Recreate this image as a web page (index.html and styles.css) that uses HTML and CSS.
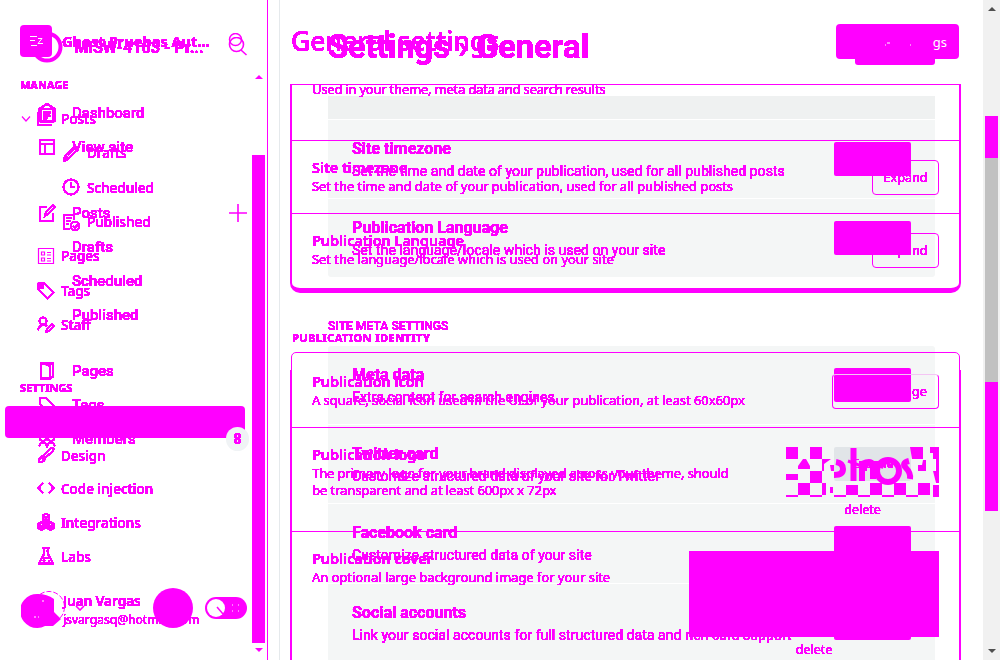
FILE: index.html
```html
<!DOCTYPE html>
<html lang="en">
<head>
<meta charset="utf-8">
<title>General settings</title>
<link rel="stylesheet" href="styles.css">
</head>
<body>
<svg class="defs" width="0" height="0"><filter id="crisp" x="-5%" y="-20%" width="110%" height="140%" color-interpolation-filters="sRGB"><feComponentTransfer><feFuncA type="linear" slope="30" intercept="-2"/></feComponentTransfer></filter></svg>
<div class="stage">
  <div class="layer roboto">
    <aside class="side">
      <header class="b-brand"><svg width="32" height="32"><circle cx="15" cy="16" r="13.5" fill="none" stroke="#f0f" stroke-width="4"/></svg><span class="t b-name">MISW-4103 - Pr...</span><svg class="b-search" width="20" height="20" fill="none" stroke="#f0f" stroke-width="1.6"><circle cx="8.5" cy="7.5" r="7"/><path d="M13 13l5.5 5"/></svg></header>
      <nav class="b-nav">
        <a><svg class="ic" viewBox="0 0 18 20"><path d="M1 6l8-5 8 5v12H1zM5 9h8M5 12h7M5 15h5"/></svg><span class="t">Dashboard</span></a>
        <a><svg class="ic" viewBox="0 0 18 20"><path d="M2 3h14v14H2zM2 7h14M7 7v10"/></svg><span class="t">View site</span></a>
        <a class="gap-lg"><svg class="ic" viewBox="0 0 18 20"><path d="M9 4H2v14h13v-8M7 13l1-4 7-7 2 2-7 7z"/></svg><span class="t">Posts</span><svg class="plus" width="18" height="18" stroke="#f0f" stroke-width="1.6"><path d="M0 9h18M9 0v18"/></svg></a>
        <a><i class="ic"></i><span class="t">Drafts</span></a>
        <a><i class="ic"></i><span class="t">Scheduled</span></a>
        <a><i class="ic"></i><span class="t">Published</span></a>
        <a class="gap-md"><svg class="ic" viewBox="0 0 18 20"><path d="M3 2.500h12v13l-3 2H3zM7 3l5 2v12"/></svg><span class="t">Pages</span></a>
        <a><svg class="ic" viewBox="0 0 18 20"><path d="M2 3h6l9 9-6 6-9-9z"/></svg><span class="t">Tags</span></a>
        <a><svg class="ic" viewBox="0 0 18 20"><circle cx="5" cy="9" r="3"/><circle cx="13" cy="9" r="3"/><path d="M1 17q4-8 8 0q4-8 8 0"/></svg><span class="t">Members</span></a>
      </nav>
      <footer class="b-foot"><svg class="ring" width="34" height="34"><circle cx="17" cy="17" r="15.500" fill="none" stroke="#f0f" stroke-dasharray="5 2"/></svg><svg class="chev" width="10" height="6" fill="none" stroke="#f0f" stroke-width="1.600"><path d="M1 1l4 4 4-4"/></svg><i class="dot"></i><svg class="toggle" width="42" height="22"><rect width="42" height="22" rx="11" fill="#f0f"/><circle cx="11" cy="11" r="9" fill="#fff"/><path d="M12 10l6 7" stroke="#f0f" stroke-width="1.500"/><path d="M27 8h1M33 8h1M27 14h1M33 14h1" stroke="#fff"/></svg></footer>
    </aside>
    <main class="b-main">
      <header class="b-head"><h1 class="t">Settings › General</h1><i class="b-save"></i></header>
      <section class="b-card first">
        <div class="b-row dim"></div>
        <div class="b-row"><div><h3 class="t">Site timezone</h3><p class="t">Set the time and date of your publication, used for all published posts</p></div><i class="b-btn"></i></div>
        <div class="b-row"><div><h3 class="t">Publication Language</h3><p class="t">Set the language/locale which is used on your site</p></div><i class="b-btn"></i></div>
      </section>
      <h2 class="t b-label">SITE META SETTINGS</h2>
      <section class="b-card second">
        <div class="b-row"><div><h3 class="t">Meta data</h3><p class="t">Extra content for search engines</p></div><i class="b-btn"></i></div>
        <div class="b-row"><div><h3 class="t">Twitter card</h3><p class="t">Customize structured data of your site for Twitter</p></div><span class="b-btn grey"><span class="t">Expand</span></span></div>
        <div class="b-row tall"><div><h3 class="t">Facebook card</h3><p class="t">Customize structured data of your site</p></div><i class="b-btn"></i></div>
        <div class="b-row"><div><h3 class="t">Social accounts</h3><p class="t">Link your social accounts for full structured data and rich card support</p></div><i class="b-btn"></i></div>
      </section>
    </main>
  </div>

  <div class="layer noto">
    <aside class="side a-side">
      <header class="a-brand"><svg width="32" height="32"><rect width="32" height="32" rx="4" fill="#f0f"/><path d="M10 11.500h7M10 15.500h5M18 13.500h4l-4 5h5M11 20.500h6" fill="none" stroke="#fff"/></svg><span class="t a-name">Ghost Pruebas Aut...</span><svg class="a-search" width="16" height="18" fill="none" stroke="#f0f" stroke-width="1.500"><circle cx="7.500" cy="6.500" r="6"/></svg></header>
      <h2 class="t a-label manage">MANAGE</h2>
      <nav class="a-nav">
        <a><svg class="caret" width="10" height="6" fill="none" stroke="#f0f" stroke-width="1.200"><path d="M1 .5l4 4.500 4-4.500"/></svg><svg class="ic" viewBox="0 0 18 18"><path d="M3.500 1h13v12.500h-13zM.5 4v13.500h14M6 5h8M6 8h8M6 11h4"/></svg><span class="t">Posts</span></a>
        <a class="sub"><svg class="ic" viewBox="0 0 18 18"><path d="M2 17l1-5L13 2l3 3L6 15zM4 12l3 3M6 11l7-7"/></svg><span class="t">Drafts</span></a>
        <a class="sub"><svg class="ic" viewBox="0 0 18 18"><circle cx="9" cy="9" r="7.500"/><path d="M9 4v5h4"/></svg><span class="t">Scheduled</span></a>
        <a class="sub"><svg class="ic" viewBox="0 0 18 18"><path d="M8 16H2V2h10v5M4 5h6M4 8h5M4 11h3"/><circle cx="13" cy="13" r="4.300"/><path d="M11 13l2 2 3-4"/></svg><span class="t">Published</span></a>
        <a class="low"><svg class="ic thin" viewBox="0 0 18 18"><path d="M1.500 1.500h15v15h-15zM4.500 5h3v3h-3zM4.500 11h3v3h-3zM10 5.500h4M10 8h4M10 11.500h4M10 14h4"/></svg><span class="t">Pages</span></a>
        <a class="low"><svg class="ic" viewBox="0 0 18 18"><path d="M1.500 1.500h6l9 9-6 6-9-9z"/><circle cx="5" cy="5" r="1"/></svg><span class="t">Tags</span></a>
        <a class="low"><svg class="ic" viewBox="0 0 18 18"><circle cx="6" cy="5" r="3.500"/><path d="M1 14q1-5 7-5l2 1M9 16l1-3 5-5 2 2-5 5z"/></svg><span class="t">Staff</span></a>
      </nav>
      <h2 class="t a-label settings">SETTINGS</h2>
      <nav class="a-nav lower">
        <a class="current"><b class="count"><span class="t">8</span></b></a>
        <a><svg class="ic" viewBox="0 0 18 18"><path d="M6 10L14 2q4-1 2 3l-8 7zM6 10q-4 1-4 6 6 0 6-4zM5 12l2 2"/></svg><span class="t">Design</span></a>
        <a><svg class="ic" viewBox="0 0 18 18"><path d="M6 4L1.500 9 6 14M12 4l4.500 5L12 14"/></svg><span class="t">Code injection</span></a>
        <a><svg class="ic" viewBox="0 0 18 18"><path d="M6 2l3-1 3 1v5l-3 2-3-2zM1.500 11l3-2 3 2v4l-3 2-3-2zM10.500 11l3-2 3 2v4l-3 2-3-2zM6 3l3 2 3-2M2 12l3 1 2-1M11 12l3 1 2-1M9 5v4M4.500 13v3M13.500 13v3"/></svg><span class="t">Integrations</span></a>
        <a><svg class="ic" viewBox="0 0 18 18"><path d="M5 1h8M7 1v6l-5 9.500h14L11 7V1M9 4h2M5 11h8M6 14l2-1M11 14h2"/></svg><span class="t">Labs</span></a>
      </nav>
      <footer class="a-user"><svg width="40" height="36"><path d="M17 2a17 17 0 1 0 7 32h8l8-7-7-7V7q-7-5-16-5z" fill="#f0f"/><path d="M13 25h2M17 25h1M22 8v2" stroke="#fff"/></svg><div><p class="t user-name">Juan Vargas</p><p class="t user-mail">jsvargasq@hotmail.com</p></div></footer>
      <div class="side-scroll"><svg width="8" height="5"><path d="M0 5l4-4 4 4z" fill="#f0f"/></svg><i></i><svg width="8" height="5"><path d="M0 0h8L4 4z" fill="#f0f"/></svg></div>
    </aside>
    <main class="a-main">
      <header class="a-head"><h1 class="t">General settings</h1><span class="a-save"><svg width="48" height="20"><path d="M0 13h1M2 11h3M25 13h1" fill="none" stroke="#fff"/></svg><span class="gs">gs</span></span></header>
      <section class="a-card top">
        <div class="a-row r1"><p class="t">Used in your theme, meta data and search results</p></div>
        <div class="a-row r2"><div><h3 class="t">Site timezone</h3><p class="t">Set the time and date of your publication, used for all published posts</p></div><span class="a-btn"><span class="t">Expand</span></span></div>
        <div class="a-row r3"><div><h3 class="t">Publication Language</h3><p class="t">Set the language/locale which is used on your site</p></div><span class="a-btn"><span class="t">Expand</span></span></div>
      </section>
      <h2 class="t a-label identity">PUBLICATION IDENTITY</h2>
      <section class="a-card bottom">
        <div class="a-row r4"><div><h3 class="t">Publication icon</h3><p class="t">A square, social icon used in the UI of your publication, at least 60x60px</p></div><span class="a-btn wide"><span class="t">Upload image</span></span></div>
        <div class="a-row r5"><div><h3 class="t">Publication logo</h3><p class="t two">The primary logo for your brand displayed across your theme, should<br>be transparent and at least 600px x 72px</p></div>
          <div class="logo"><svg width="153" height="50"><g fill="#f0f"><path d="M0 0h12v12H0zM24 0h12v12H24zM124 0h13v12h-11zM144 0h9v12h-6v-6h-3zM12 19l5-7h3l4 7v3H12zM0 27h12v6H0zM24 24h12v12H24zM36 12h9l-7 5v7h-2zM12 36h12v12H12zM132 18h4l1-5h3v11h-8zM147 24h6v12h-3zM150 12h3v12h-3zM0 48h12v2H0zM24 48h12v2H24zM36 36h4v12h-4zM60 38h12v10H60zM84 36h12v12H84zM108 36h12v12h-12zM132 36h12v12h-12zM147 38h6v12h-6zM48 48h12v2H48zM72 48h12v2H72zM96 48h12v2H96zM120 48h12v2h-12zM44 18h4v6h-3zM44 40h3v6h-3z"/></g><g fill="none" stroke="#f0f" stroke-width="6"><path d="M50 15q7 1 7 7t-9 6M67.500 1v33M76 34V16M76 17q11-5 11 3v12"/><ellipse cx="102" cy="24" rx="11" ry="11"/><path d="M123 14q-8 2-3 7t4 11"/></g><path d="M62 14l11 4 4 3 4-4 5 3 5-4 5 4 4-5 6 5" fill="none" stroke="#f0f" stroke-width="3"/></svg><span class="t">delete</span></div></div>
        <div class="a-row r6"><div><h3 class="t">Publication cover</h3><p class="t">An optional large background image for your site</p></div><div class="cover"><i></i><span class="t">delete</span></div></div>
      </section>
    </main>
    <div class="page-scroll"><svg width="8" height="5"><path d="M0 5l4-4 4 4z" fill="#505050"/></svg><i class="thumb"></i><svg width="8" height="5"><path d="M0 0h8L4 4z" fill="#505050"/></svg></div>
  </div>
</div>
</body>
</html>
```
FILE: styles.css
```css
* { box-sizing: border-box; }
body, h1, h2, h3, p { margin: 0; }
body { background: #fff; color: #f0f; overflow: hidden; }
.defs { position: absolute; }
.stage { position: relative; width: 1000px; height: 660px; overflow: hidden; }
.layer { position: absolute; inset: 0; display: flex; }
.roboto { font-family: Roboto, sans-serif; }
.noto { font-family: "Noto Sans", sans-serif; }
.t { filter: url(#crisp); white-space: nowrap; display: block; }
svg { display: block; flex: none; }
.ic { width: 18px; height: 20px; fill: none; stroke: #f0f; stroke-width: 1.6; flex: none; filter: url(#crisp); }
.ic.thin { stroke-width: 1.2; filter: none; }
.side { width: 280px; height: 660px; flex: none; border-right: 1px solid #e5e9ec; }

/* base sidebar */
.b-brand { height: 96px; padding: 31px 0 0 32px; display: flex; align-items: flex-start; }
.b-name { font-size: 16.200px; line-height: 34px; margin-left: 10px; width: 154px; font-weight: 700; }
.b-search { margin-top: 6px; }
.b-nav a { display: flex; align-items: center; height: 34px; padding-left: 38px; font-size: 15px; font-weight: 500; }
.b-nav .ic { margin-right: 16px; }
.b-nav .gap-lg { margin-top: 32px; }
.b-nav .gap-md { margin-top: 22px; }
.plus { margin-left: auto; margin-right: 32px; }
.b-foot { display: flex; align-items: center; padding-left: 32px; margin-top: 132px; height: 40px; }
.ring { margin-top: -2px; }
.chev { margin-left: 9px; margin-right: 68px; }
.dot { width: 40px; height: 40px; border-radius: 50%; background: #f0f; }
.toggle { margin-left: 12px; }

/* base content */
.b-main { padding-left: 48px; width: 655px; }
.b-head { height: 96px; display: flex; justify-content: space-between; }
.b-head h1 { font-size: 32.600px; line-height: 40px; margin-top: 27px; font-weight: 700; }
.b-save { width: 80px; height: 39px; margin-top: 26px; background: #f0f; border-radius: 3px; }
.b-card { background: #f4f6f6; border-radius: 3px; }
.b-row { height: 79px; padding: 18px 24px 0; display: flex; justify-content: space-between; border-bottom: 1px solid #fff; }
.b-row.tall { height: 80px; }
.b-row:last-child { border-bottom: 0; }
.b-row.dim { height: 24px; background: #eff1f1; }
.b-row h3 { font-size: 16px; line-height: 21px; font-weight: 700; }
.b-row p { font-size: 14px; line-height: 20px; margin-top: 2px; letter-spacing: .05px; }
.b-btn { width: 77px; height: 34px; margin-top: 4px; border-radius: 2px; background: #f0f; flex: none; }
.b-btn.grey { background: #e1e5e8; font-size: 13px; text-align: center; line-height: 34px; }
.b-card.first { height: 181px; }
.b-label { font-size: 12px; line-height: 17px; margin: 41px 0 11px; font-weight: 500; letter-spacing: .08px; }

/* upper sidebar */
.a-side { position: relative; border: 0; display: flex; flex-direction: column; background: linear-gradient(#f0f, #f0f) 267px 0 / 1px 100% no-repeat; }
.a-brand { height: 77px; padding: 25px 0 0 20px; display: flex; }
.a-name { margin-left: 10px; width: 166px; font-size: 14.600px; line-height: 32px; font-weight: 700; }
.a-search { margin-top: 8px; }
.a-label { font-size: 11px; line-height: 16px; font-weight: 700; }
.manage { margin-left: 20px; height: 25px; }
.a-nav a { height: 34.300px; padding-left: 37px; display: flex; align-items: center; font-size: 13.500px; font-weight: 500; }
.a-nav .ic { height: 18px; margin-right: 6px; margin-bottom: 4px; }
.a-nav .sub .ic { margin-bottom: 1px; }
.a-nav .low .ic { margin-bottom: 0; }
.lower .ic { margin-bottom: 2px; }
.a-nav .sub { padding-left: 62px; }
.a-nav .sub .t { margin-left: 1px; }
.caret { margin: 0 6px 0 -16px; }
.settings { margin: 38px 0 9px 20px; }
.lower a { height: 33.600px; }
.a-nav .current { position: relative; width: 240px; height: 32px; margin: 1px 0 1px 5px; border-radius: 4px; background: #f0f; }
.count { position: absolute; right: -4px; bottom: -13px; width: 23px; height: 24px; border-radius: 12px; background: #f0f3f5; text-align: center; font: 700 14px/24px Roboto, sans-serif; }
.a-user { margin-top: 19px; padding-left: 21px; display: flex; }
.a-user > div { margin-left: 2px; margin-top: 0; }
.user-name { font-size: 13.500px; line-height: 18px; font-weight: 600; }
.user-mail { font-size: 12.100px; line-height: 19px; font-weight: 400; }
.side-scroll { position: absolute; left: 252px; top: 74px; height: 580px; width: 13px; display: flex; flex-direction: column; align-items: center; }
.side-scroll i { margin: 76px 0 5px; width: 13px; height: 488px; background: #f0f; }

/* upper content */
.a-main { margin-left: 10px; width: 671px; }
.a-head { height: 84px; display: flex; justify-content: space-between; padding: 24px 2px 0 1px; }
.a-head h1 { font-size: 26.400px; line-height: 34px; font-weight: 500; letter-spacing: .1px; }
.a-save { width: 123px; height: 35px; border-radius: 4px; background: #f0f; display: flex; justify-content: flex-end; padding: 8px 12px; }
.gs { color: #fff; font-size: 13px; line-height: 20px; }
.a-card { border: 2px solid #f0f; }
.a-card.top { height: 209px; border-top-width: 1px; border-bottom-width: 5px; border-radius: 0 0 10px 10px; }
.a-card.bottom { position: relative; height: 340px; margin: 0 1px; border-width: 1px; border-radius: 5px 5px 0 0; }
.a-card.bottom::before, .a-card.bottom::after { content: ""; position: absolute; top: 17px; bottom: 0; width: 1px; background: #f0f; }
.a-card.bottom::before { left: -2px; }
.a-card.bottom::after { right: -2px; }
.a-row { display: flex; justify-content: space-between; padding: 0 20px 0 20px; border-bottom: 1px solid #f0f; }
.a-row h3 { font-size: 14.400px; line-height: 18px; font-weight: 600; }
.a-row p { font-size: 13px; line-height: 18px; font-weight: 400; letter-spacing: -.05px; }
.a-row p.two { line-height: 17px; margin-top: 1px; letter-spacing: -.1px; }
.r1 { height: 56px; }
.a-row.r1 p { margin-top: -5px; letter-spacing: -.22px; }
.r2 { height: 73px; padding-top: 18px; }
.r3 { padding-top: 18px; border: 0; }
.identity { margin: 37px 0 6px 2px; letter-spacing: .45px; }
.r4 { height: 75px; padding-top: 20px; }
.r5 { height: 104px; padding-top: 18px; }
.r6 { padding-top: 18px; border: 0; }
.a-btn { width: 67px; height: 35px; border: 1px solid #f0f; border-radius: 4px; text-align: center; font-size: 12.600px; line-height: 34px; font-weight: 400; margin-top: 1px; }
.wide { width: 107px; border-top-color: #f4c4f4; }
.logo, .cover { font-size: 12.500px; line-height: 25px; text-align: center; font-weight: 400; }
.logo { padding-top: 1px; }
.cover i { display: block; width: 250px; height: 86px; background: #f0f; margin-top: 1px; }

.page-scroll { margin-left: auto; margin-right: 0; width: 17px; height: 660px; background: #f1f1f1; display: flex; flex-direction: column; align-items: center; padding: 6px 0; }
.thumb { width: 13px; height: 395px; margin: 105px 0 auto; background: linear-gradient(#f0f 42px, #c1c1c1 42px 266px, #f0f 266px); }
```
